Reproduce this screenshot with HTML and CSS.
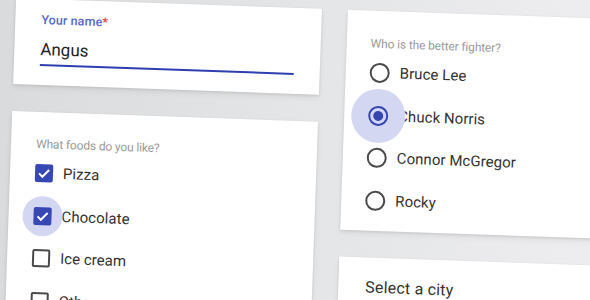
FILE: index.html
```html
<!DOCTYPE html>
<html>
<head>
<meta charset="utf-8">
<link rel="stylesheet" href="styles.css">
</head>
<body>
<div class="stage">
  <div class="col">
    <div class="card card-name">
      <div class="field-label">Your name<span class="req">*</span></div>
      <div class="field-input">Angus</div>
    </div>
    <div class="card card-list">
      <div class="q">What foods do you like?</div>
      <div class="row">
        <span class="ctl"><span class="box checked"><svg viewBox="0 0 18 18" width="18" height="18"><path d="M4 9.3 L7.4 12.6 L14 5.6" fill="none" stroke="#fff" stroke-width="2"/></svg></span></span>
        <span class="opt">Pizza</span>
      </div>
      <div class="row">
        <span class="ctl"><span class="halo halo-sm"></span><span class="box checked"><svg viewBox="0 0 18 18" width="18" height="18"><path d="M4 9.3 L7.4 12.6 L14 5.6" fill="none" stroke="#fff" stroke-width="2"/></svg></span></span>
        <span class="opt">Chocolate</span>
      </div>
      <div class="row">
        <span class="ctl"><span class="box"></span></span>
        <span class="opt">Ice cream</span>
      </div>
      <div class="row">
        <span class="ctl"><span class="box"></span></span>
        <span class="opt">Other</span>
      </div>
    </div>
  </div>
  <div class="col">
    <div class="card card-radio">
      <div class="q">Who is the better fighter?</div>
      <div class="row">
        <span class="ctl"><span class="radio"></span></span>
        <span class="opt">Bruce Lee</span>
      </div>
      <div class="row">
        <span class="ctl"><span class="halo halo-lg"></span><span class="radio on"><span class="dot"></span></span></span>
        <span class="opt">Chuck Norris</span>
      </div>
      <div class="row">
        <span class="ctl"><span class="radio"></span></span>
        <span class="opt">Connor McGregor</span>
      </div>
      <div class="row">
        <span class="ctl"><span class="radio"></span></span>
        <span class="opt">Rocky</span>
      </div>
    </div>
    <div class="card card-select">
      <div class="select-label">Select a city</div>
    </div>
  </div>
</div>
</body>
</html>
```

FILE: styles.css
```css
html, body {
  margin: 0;
  padding: 0;
}
body {
  width: 590px;
  height: 300px;
  overflow: hidden;
  background: linear-gradient(90deg, #dadbdd 0%, #e4e5e7 50%, #ededef 100%);
  font-family: Roboto, "Noto Sans", sans-serif;
}
.stage {
  width: 590px;
  height: 300px;
  box-sizing: border-box;
  padding: 8px 0 0 11px;
  display: grid;
  grid-template-columns: 306px 305px;
  column-gap: 26px;
  align-items: start;
  transform: rotate(2deg);
  transform-origin: 295px 150px;
}
.col {
  display: flex;
  flex-direction: column;
  gap: 27px;
}
.card {
  background: #fff;
  box-shadow: 0 1px 3px rgba(0,0,0,0.10), 0 3px 6px rgba(0,0,0,0.06);
  box-sizing: border-box;
}
.card-name {
  height: 86px;
  padding: 13px 26px 0 26px;
}
.field-label {
  font-size: 12.5px;
  line-height: 16px;
  font-weight: 500;
  color: #5a68c6;
  letter-spacing: 0.1px;
}
.req {
  color: #e53935;
}
.field-input {
  margin-top: 10px;
  font-size: 17px;
  line-height: 22px;
  color: #222;
  padding-bottom: 4px;
  border-bottom: 2px solid #2f3fb0;
}
.card-list {
  height: 220px;
  padding: 24px 24px 0 25px;
}
.card-radio {
  height: 220px;
  padding: 25px 24px 0 24px;
}
.q {
  font-size: 12px;
  line-height: 16px;
  color: #9a9a9a;
  letter-spacing: -0.15px;
}
.row {
  height: 42.6px;
  display: flex;
  align-items: center;
}
.ctl {
  position: relative;
  width: 20px;
  height: 20px;
  display: flex;
  align-items: center;
  justify-content: center;
  flex: none;
}
.card-list .ctl {
  width: 18px;
  height: 18px;
}
.opt {
  margin-left: 10px;
  font-size: 15px;
  color: #333;
  letter-spacing: 0.05px;
}
.box {
  position: relative;
  width: 18px;
  height: 18px;
  box-sizing: border-box;
  border: 2px solid #4a4a4a;
  border-radius: 2px;
}
.box.checked {
  border: none;
  background: #3748b4;
}
.box svg {
  display: block;
}
.radio {
  position: relative;
  width: 20px;
  height: 20px;
  box-sizing: border-box;
  border: 2px solid #4a4a4a;
  border-radius: 50%;
  display: flex;
  align-items: center;
  justify-content: center;
}
.radio.on {
  border-color: #3444b2;
}
.dot {
  width: 10px;
  height: 10px;
  border-radius: 50%;
  background: #3444b2;
}
.halo {
  position: absolute;
  border-radius: 50%;
  background: #d3d7f1;
}
.halo-sm {
  width: 40px;
  height: 40px;
  left: -11px;
  top: -11px;
}
.halo-lg {
  width: 54px;
  height: 54px;
  left: -17px;
  top: -17px;
}
.card-select {
  height: 80px;
  padding: 20px 24px 0 27px;
}
.select-label {
  font-size: 16px;
  line-height: 20px;
  color: #333;
  letter-spacing: 0.2px;
}
```
